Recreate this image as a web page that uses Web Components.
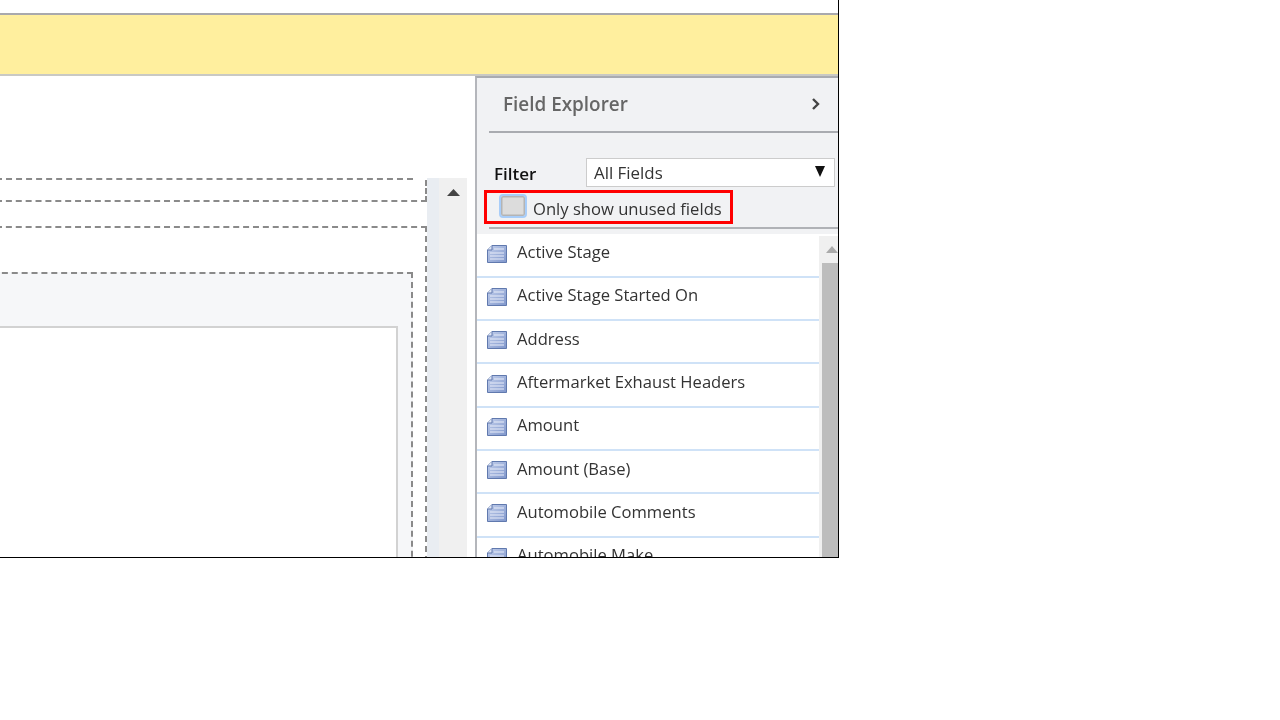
<!DOCTYPE html>
<html>
<head>
<meta charset="utf-8">
<style>
  html, body { margin: 0; background: #fff; font-family: "Open Sans", "Liberation Sans", sans-serif; }
</style>
</head>
<body>
<form-editor></form-editor>

<template id="tpl-form-editor">
  <style>
    :host { display: flex; flex-direction: column; width: 839px; height: 558px; box-sizing: border-box;
      border-right: 1px solid #000; border-bottom: 1px solid #000; overflow: hidden; background: #fff; }
    .top { height: 13px; flex: none; background: #fff; }
    .notice { height: 59px; flex: none; background: #ffef9e; border-top: 2px solid #a9a9ad; border-bottom: 2px solid #c9c9c4; }
    .main { flex: 1; display: flex; min-height: 0; }
  </style>
  <div class="top"></div>
  <div class="notice"></div>
  <div class="main">
    <form-canvas></form-canvas>
    <field-explorer></field-explorer>
  </div>
</template>

<template id="tpl-form-canvas">
  <style>
    :host { display: flex; width: 475px; flex: none; box-sizing: border-box; padding: 102px 8px 0 0; overflow: hidden; }
    .area { width: 427px; flex: none; overflow: hidden; filter: blur(.45px); }
    .tab-top { height: 0; margin: 0 14px 0 -4px; border-top: 2px dashed #8a8a8a; }
    .tab { height: 20px; margin-left: -4px; border-right: 2px dashed #8a8a8a; border-bottom: 2px dashed #8a8a8a; }
    .section { margin-top: 24px; height: 400px; margin-left: -4px; border-top: 2px dashed #8a8a8a; border-right: 2px dashed #8a8a8a; padding: 44px 12px 0 0; }
    .inner { height: 400px; margin-left: -4px; background: #f6f7f9; border-top: 2px dashed #8a8a8a; border-right: 2px dashed #8a8a8a; padding: 52px 13px 0 0; }
    .box { height: 300px; margin-left: -4px; background: #fff; border: 2px solid #d2d2d2; border-left: 0; }
    .scroll { width: 40px; flex: none; display: flex; background: #f0f0f0; }
    .scroll i { display: block; width: 12px; flex: none; background: #e9edf2; }
    .scroll b { flex: 1; display: flex; justify-content: center; padding-top: 11px; }
    .scroll svg { display: block; }
  </style>
  <div class="area">
    <div class="tab-top"></div>
    <div class="tab"></div>
    <div class="section">
      <div class="inner"><div class="box"></div></div>
    </div>
  </div>
  <div class="scroll">
    <i></i>
    <b><svg width="13" height="7" viewBox="0 0 13 7"><path d="M6.5 0 13 7H0z" fill="#444"/></svg></b>
  </div>
</template>

<template id="tpl-field-explorer">
  <style>
    :host { display: flex; flex-direction: column; flex: 1; min-width: 0; box-sizing: border-box;
      border-left: 2px solid #b4b6bb; border-top: 2px solid #a9abb0; background: #f1f2f4; }
    .txt { filter: blur(.3px); }
    .head { display: flex; align-items: center; justify-content: space-between; height: 55px; flex: none; box-sizing: border-box;
      margin-left: 12px; padding: 0 17px 2px 14px; border-bottom: 2px solid #a9abb0; }
    .head span { font: 600 18.9px "Open Sans", sans-serif; color: #666; }
    .filter { display: flex; align-items: center; margin: 25px 3px 0 17px; height: 29px; flex: none; }
    .filter label { width: 92px; flex: none; padding-top: 1px; font: 600 17px "Open Sans", sans-serif; color: #111; }
    .select { flex: 1; height: 29px; box-sizing: border-box; display: flex; align-items: center; justify-content: space-between;
      padding: 0 9px 0 7px; background: #fff; border: 1px solid #ccc; font-size: 16.9px; color: #333; }
    .select svg { margin-top: -3px; }
    .unused { display: flex; align-items: center; flex: none; box-sizing: border-box; position: relative; height: 34px; width: 249px;
      margin: 3px 0 0 7px; padding-left: 14px; border: 3px solid #f00; font-size: 16.6px; color: #333; gap: 6px; white-space: nowrap; }
    .unused span { padding-top: 2px; }
    .check { width: 28px; height: 24px; flex: none; box-sizing: border-box; border: 2px solid #a8cdf9; border-radius: 4px;
      background: #dcdcdc; box-shadow: inset 0 0 0 1.5px #b4b4b4; margin-left: -2px; margin-top: -3px; filter: blur(.4px); }
    .rule { height: 2px; flex: none; margin: 3px 0 0 12px; background: #b0b2b6; }
    .body { flex: 1; min-height: 0; display: flex; margin-top: 5px; background: #fff; overflow: hidden; }
    .list { flex: 1; min-width: 0; padding-top: .5px; }
    .bar { width: 19px; flex: none; margin-top: 2px; background: #f0f0f0; display: flex; flex-direction: column; }
    .bar .up { height: 27px; flex: none; padding: 10px 0 0 7px; box-sizing: border-box; }
    .bar .thumb { flex: 1; margin-left: 3px; background: #bdbdbd; }
    .bar svg { display: block; }
  </style>
  <div class="head">
    <span class="txt">Field Explorer</span>
    <svg class="txt" width="10" height="14" viewBox="0 0 10 14"><path d="M2 2l5 5-5 5" fill="none" stroke="#444" stroke-width="2.4"/></svg>
  </div>
  <div class="filter">
    <label class="txt">Filter</label>
    <div class="select">
      <span class="txt">All Fields</span>
      <svg width="10" height="11" viewBox="0 0 10 11"><path d="M0 0h10L5 11z" fill="#111"/></svg>
    </div>
  </div>
  <div class="unused"><div class="check"></div><span class="txt">Only show unused fields</span></div>
  <div class="rule"></div>
  <div class="body">
    <div class="list"><slot></slot></div>
    <div class="bar">
      <div class="up"><svg width="12" height="7" viewBox="0 0 12 7"><path d="M6 0l6 7H0z" fill="#aaa"/></svg></div>
      <div class="thumb"></div>
    </div>
  </div>
</template>

<template id="tpl-field-item">
  <style>
    :host { display: flex; align-items: center; height: 43.3px; box-sizing: border-box; padding: 0 0 7px 9px; gap: 9px;
      border-bottom: 2px solid #cfe2f7; font-size: 16.6px; color: #333; white-space: nowrap; background: #fff; }
    svg { flex: none; display: block; margin-top: 4px; filter: blur(.3px); }
    span { filter: blur(.3px); }
  </style>
  <svg width="22" height="20" viewBox="0 0 22 20">
    <defs>
      <linearGradient id="page" x1="0" y1="0" x2="1" y2="1">
        <stop offset="0" stop-color="#c3d0ec"/>
        <stop offset="1" stop-color="#7f96cb"/>
      </linearGradient>
    </defs>
    <path d="M6 1.5h14.5v17H1.5V6z" fill="url(#page)" stroke="#6079ae"/>
    <path d="M1.5 6H6V1.5" fill="#dfe6f5" stroke="#6079ae"/>
    <path d="M8 5h10M4 9h14M4 12h14M4 15h14" stroke="#e9eef9" stroke-width="1.1"/>
  </svg>
  <span><slot></slot></span>
</template>

<script>
  // every element clones its template into an open shadow root
  class TemplatedElement extends HTMLElement {
    constructor() {
      super()
      const el = document.querySelector(this.constructor.template).content.cloneNode(true)
      this.attachShadow({ mode: 'open' }).appendChild(el)
    }
  }

  class FieldItem extends TemplatedElement { static template = '#tpl-field-item' }
  class FormCanvas extends TemplatedElement { static template = '#tpl-form-canvas' }

  class FieldExplorer extends TemplatedElement {
    static template = '#tpl-field-explorer'
    connectedCallback() {
      const fields = ['Active Stage', 'Active Stage Started On', 'Address', 'Aftermarket Exhaust Headers',
        'Amount', 'Amount (Base)', 'Automobile Comments', 'Automobile Make']
      fields.forEach(name => {
        const item = document.createElement('field-item')
        item.textContent = name
        this.appendChild(item)
      })
    }
  }

  class FormEditor extends TemplatedElement { static template = '#tpl-form-editor' }

  customElements.define('field-item', FieldItem)
  customElements.define('form-canvas', FormCanvas)
  customElements.define('field-explorer', FieldExplorer)
  customElements.define('form-editor', FormEditor)
</script>
</body>
</html>
